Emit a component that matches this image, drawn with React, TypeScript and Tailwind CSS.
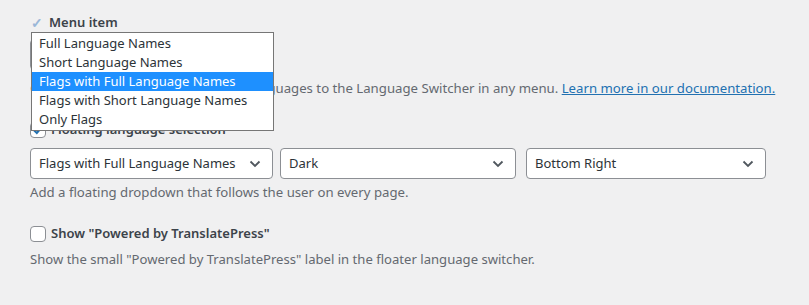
const font = "font-['Noto_Sans','Open_Sans',sans-serif]";

function Chevron() {
  return (
    <svg width="12" height="8" viewBox="0 0 12 8" className="shrink-0">
      <path d="M1.5 1.5 6 6l4.5-4.5" fill="none" stroke="#50575e" strokeWidth="1.8" />
    </svg>
  );
}

function Select({ value, width }: { value: string; width: string }) {
  return (
    <div
      className={`flex h-[31px] items-center justify-between rounded-[4px] border border-[#8c8f94] bg-white pl-[8px] pr-[11px] text-[13px] text-[#2c3338] ${width}`}
    >
      <span className="whitespace-nowrap">{value}</span>
      <Chevron />
    </div>
  );
}

const options = [
  "Full Language Names",
  "Short Language Names",
  "Flags with Full Language Names",
  "Flags with Short Language Names",
  "Only Flags",
];

export default function App() {
  return (
    <div className={`relative h-[305px] w-[809px] overflow-hidden bg-[#f0f0f1] ${font} text-[#3c434a]`}>
      <div className="flex flex-col pl-[30px] pt-[13px]">
        <label className="flex h-[20px] items-center gap-[6px] text-[13px] font-semibold">
          <span className="flex w-[13px] justify-center text-[14px] leading-none text-[#9ab7d8]">✓</span>
          Menu item
        </label>
        <div className="mt-[6px] h-[31px]">
          <Select value="Flags with Full Language Names" width="w-[243px]" />
        </div>
        <p className="mt-[8px] whitespace-nowrap text-[13.2px] leading-[20px] text-[#646970]">
          Go to Appearance -&gt; Menus to add languages to the Language Switcher in any menu.{" "}
          <a className="text-[#2271b1] underline">Learn more in our documentation.</a>
        </p>
        <label className="mt-[22px] flex h-[20px] items-center gap-[5px] text-[13px] font-semibold">
          <span className="flex h-[16px] w-[16px] items-center justify-center rounded-[4px] border border-[#8c8f94] bg-white">
            <svg width="12" height="12" viewBox="0 0 12 12">
              <path d="M2 6.2 4.8 9 10 3" fill="none" stroke="#2271b1" strokeWidth="2" />
            </svg>
          </span>
          Floating language selection
        </label>
        <div className="mt-[8px] flex gap-[7px]">
          <Select value="Flags with Full Language Names" width="w-[243px]" />
          <Select value="Dark" width="w-[236px]" />
          <div className="ml-[3px]">
            <Select value="Bottom Right" width="w-[240px]" />
          </div>
        </div>
        <p className="mt-[3px] text-[13.2px] leading-[20px] text-[#646970]">
          Add a floating dropdown that follows the user on every page.
        </p>
        <label className="mt-[22px] flex h-[20px] items-center gap-[5px] text-[13px] font-semibold">
          <span className="h-[16px] w-[16px] rounded-[4px] border border-[#8c8f94] bg-white" />
          Show "Powered by TranslatePress"
        </label>
        <p className="mt-[5px] text-[13.1px] leading-[20px] text-[#646970]">
          Show the small "Powered by TranslatePress" label in the floater language switcher.
        </p>
      </div>

      <ul className="absolute left-[31px] top-[32px] w-[243px] border border-[#767676] bg-white py-[1px] text-[13px] text-[#2c3338]">
        {options.map((o) => (
          <li
            key={o}
            className={`flex h-[19px] items-center pl-[7px] ${
              o === "Flags with Full Language Names" ? "bg-[#1e90ff] text-white" : ""
            }`}
          >
            {o}
          </li>
        ))}
      </ul>
    </div>
  );
}
